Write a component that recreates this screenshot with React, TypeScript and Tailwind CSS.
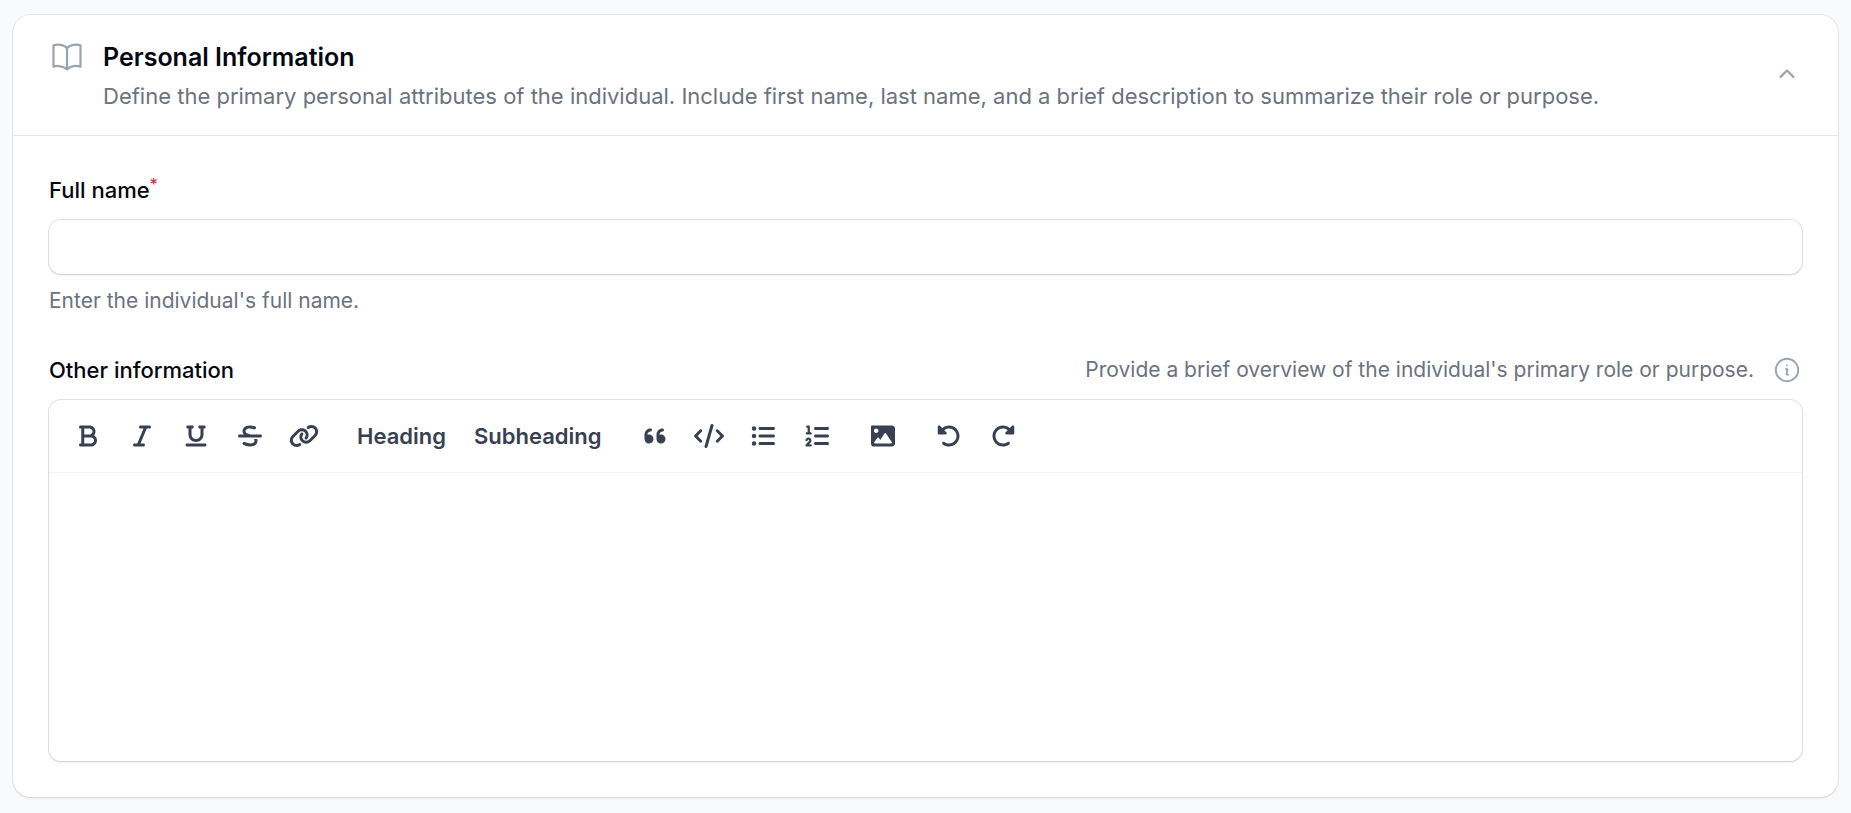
import { useState } from "react";
import type { ReactNode } from "react";
import {
  FaBold,
  FaCode,
  FaItalic,
  FaLink,
  FaListOl,
  FaListUl,
  FaStrikethrough,
  FaUnderline,
} from "react-icons/fa6";
import { HiMiniChevronUp, HiOutlineBookOpen, HiOutlineInformationCircle } from "react-icons/hi2";

type Tool = { label: string; icon?: ReactNode };

const undoPath =
  "M480 256c0 123.4-100.5 223.9-223.9 223.9c-48.84 0-95.17-15.58-134.2-44.86c-14.12-10.59-16.97-30.66-6.375-44.81c10.59-14.12 30.62-16.94 44.81-6.375c27.84 20.91 61 31.94 95.88 31.94C344.3 415.8 416 344.1 416 256s-71.69-159.8-159.8-159.8c-37.46 0-73.09 13.49-101.3 36.64l45.12 45.14c17.01 17.02 4.955 46.1-19.1 46.1H35.17C24.58 224.1 16 215.5 16 204.9V59.04c0-24.04 29.07-36.08 46.07-19.07l47.6 47.63C149.9 52.71 201.5 32.11 256.1 32.11C379.5 32.11 480 132.6 480 256z";
const imagePath =
  "M447.1 32H20C9 32 0 41 0 52v372c0 31 25 56 56 56h392c35.35 0 64-28.65 64-64V96C511.1 60.65 483.3 32 447.1 32zM111.1 96c26.51 0 48 21.49 48 48S138.5 192 111.1 192s-48-21.49-48-48S85.48 96 111.1 96zM446.1 407.6C443.3 412.8 437.9 416 432 416H82.01c-6.021 0-11.53-3.379-14.26-8.75c-2.73-5.367-2.215-11.81 1.334-16.68l70-96C142.1 290.4 146.9 288 152 288s9.916 2.441 12.93 6.574l32.46 44.51l93.3-139.1C293.7 194.7 298.7 192 304 192s10.35 2.672 13.31 7.125l128 192C448.6 396 448.9 402.3 446.1 407.6z";
const quotePath =
  "M96 224C84.72 224 74.05 226.3 64 229.9V224c0-35.3 28.7-64 64-64c17.67 0 32-14.33 32-32S145.7 96 128 96C57.42 96 0 153.4 0 224v96c0 53.02 42.98 96 96 96s96-42.98 96-96S149 224 96 224zM352 224c-11.28 0-21.95 2.305-32 5.879V224c0-35.3 28.7-64 64-64c17.67 0 32-14.33 32-32s-14.33-32-32-32c-70.58 0-128 57.42-128 128v96c0 53.02 42.98 96 96 96s96-42.98 96-96S405 224 352 224z";

function Glyph({ d, viewBox = "0 0 512 512", className = "" }: { d: string; viewBox?: string; className?: string }) {
  return (
    <svg viewBox={viewBox} fill="currentColor" aria-hidden="true" className={`size-6 ${className}`}>
      <path d={d} />
    </svg>
  );
}

const toolGroups: Tool[][] = [
  [
    { label: "Bold", icon: <FaBold className="size-6" /> },
    { label: "Italic", icon: <FaItalic className="size-6" /> },
    { label: "Underline", icon: <FaUnderline className="size-6" /> },
    { label: "Strikethrough", icon: <FaStrikethrough className="size-6" /> },
    { label: "Link", icon: <FaLink className="h-6 w-[30px]" /> },
  ],
  [{ label: "Heading" }, { label: "Subheading" }],
  [
    { label: "Blockquote", icon: <Glyph d={quotePath} viewBox="0 0 448 512" /> },
    { label: "Code block", icon: <FaCode className="h-6 w-[30px]" /> },
    { label: "Bullets", icon: <FaListUl className="size-6" /> },
    { label: "Numbers", icon: <FaListOl className="size-6" /> },
  ],
  [{ label: "Attach image", icon: <Glyph d={imagePath} /> }],
  [
    { label: "Undo", icon: <Glyph d={undoPath} /> },
    { label: "Redo", icon: <Glyph d={undoPath} className="-scale-x-100" /> },
  ],
];

function Toolbar() {
  return (
    <div
      role="toolbar"
      aria-label="Formatting"
      className="flex flex-wrap gap-x-[18px] gap-y-1.5 border-b border-gray-100 px-[15px] py-3"
    >
      {toolGroups.map((group, i) => (
        <div key={i} className="flex gap-1.5">
          {group.map((tool) =>
            tool.icon ? (
              <button
                key={tool.label}
                type="button"
                aria-label={tool.label}
                className="flex size-12 items-center justify-center rounded-xl text-[#374151] hover:bg-gray-50"
              >
                {tool.icon}
              </button>
            ) : (
              <button
                key={tool.label}
                type="button"
                className="flex h-12 items-center justify-center rounded-xl px-[11px] text-[22px] font-semibold text-[#374151] hover:bg-gray-50"
              >
                {tool.label}
              </button>
            ),
          )}
        </div>
      ))}
    </div>
  );
}

export default function App() {
  const [open, setOpen] = useState(true);
  return (
    <main className="min-h-screen bg-[#f9fafb] px-[13px] py-[15px] font-['Inter','Liberation_Sans',sans-serif] text-[21px] leading-[30px] text-[#030712]">
      <section className="rounded-[18px] bg-white shadow-[0_2px_2px_rgba(0,0,0,0.06)] ring-1 ring-[#030712]/8">
        <header className="flex items-center gap-[18px] px-9 py-6">
          <HiOutlineBookOpen className="size-9 self-start text-[#9ca3af]" />
          <div className="grid flex-1 gap-1.5">
            <h2 className="text-[25px] leading-9 font-semibold">Personal Information</h2>
            <p className="text-[22px] text-[#6b7280]">
              Define the primary personal attributes of the individual. Include first name, last name, and a brief
              description to summarize their role or purpose.
            </p>
          </div>
          <button
            type="button"
            aria-label="Toggle section"
            aria-expanded={open}
            onClick={() => setOpen(!open)}
            className="text-[#9ca3af]"
          >
            <HiMiniChevronUp className="size-[30px]" />
          </button>
        </header>
        {open && (
          <div className="grid gap-9 border-t border-gray-200 p-9">
            <div className="grid gap-3">
              <label htmlFor="full-name" className="text-[22px] leading-9 font-medium">
                Full name
                <sup className="text-[16px] text-[#e11d48]">*</sup>
              </label>
              <input
                id="full-name"
                type="text"
                required
                aria-describedby="full-name-help"
                className="h-[54px] w-full rounded-xl bg-white px-[18px] shadow-[0_2px_2px_rgba(0,0,0,0.06)] ring-1 ring-[#030712]/12 outline-none"
              />
              <p id="full-name-help" className="text-[#6b7280]">
                Enter the individual's full name.
              </p>
            </div>
            <div className="grid gap-3">
              <div className="flex items-center justify-between gap-[18px]">
                <label htmlFor="other-information" className="text-[22px] leading-9 font-medium">
                  Other information
                </label>
                <div className="flex items-center gap-[18px] text-[#6b7280]">
                  <span>Provide a brief overview of the individual's primary role or purpose.</span>
                  <HiOutlineInformationCircle className="size-[30px] text-[#9ca3af]" />
                </div>
              </div>
              <div className="rounded-xl bg-white shadow-[0_2px_2px_rgba(0,0,0,0.06)] ring-1 ring-[#030712]/12">
                <Toolbar />
                <textarea
                  id="other-information"
                  className="block h-[288px] w-full resize-none rounded-b-xl bg-transparent px-[18px] py-3 outline-none"
                />
              </div>
            </div>
          </div>
        )}
      </section>
    </main>
  );
}
